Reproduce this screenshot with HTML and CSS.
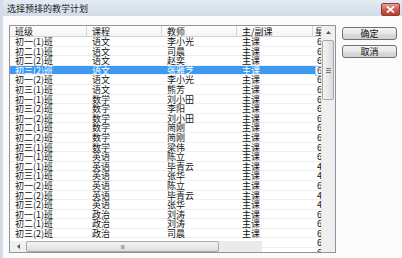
FILE: index.html
```html
<!DOCTYPE html>
<html lang="zh-CN">
<head>
    <meta charset="UTF-8">
    <title>选择预排的教学计划</title>
    <link rel="stylesheet" href="styles.css">
</head>
<body>
    <div class="window">
        <div class="titlebar">
            <span class="title">选择预排的教学计划</span>
            <span class="close-btn">
                <svg width="9" height="7" viewBox="0 0 9 7"><path d="M1 0.5 L8 6.5 M8 0.5 L1 6.5" stroke="#fff" stroke-width="1.8"/></svg>
            </span>
        </div>
        <div class="content">
            <div class="listview">
                <div class="grid">
                    <div class="row header">
                        <div class="cell c1">班级</div>
                        <div class="cell c2">课程</div>
                        <div class="cell c3">教师</div>
                        <div class="cell c4">主/副课</div>
                        <div class="cell c5">星期课时</div>
                    </div>
                    <div class="rows">
                        <div class="row"><div class="cell c1">初一(1)班</div><div class="cell c2">语文</div><div class="cell c3">李小光</div><div class="cell c4">主课</div><div class="cell c5">6</div></div>
                        <div class="row"><div class="cell c1">初二(1)班</div><div class="cell c2">语文</div><div class="cell c3">司晨</div><div class="cell c4">主课</div><div class="cell c5">6</div></div>
                        <div class="row"><div class="cell c1">初二(2)班</div><div class="cell c2">语文</div><div class="cell c3">赵奕</div><div class="cell c4">主课</div><div class="cell c5">6</div></div>
                        <div class="row selected"><div class="cell c1">初三(2)班</div><div class="cell c2">语文</div><div class="cell c3">张雅芝</div><div class="cell c4">主课</div><div class="cell c5"><span class="focus">6</span></div></div>
                        <div class="row"><div class="cell c1">初一(2)班</div><div class="cell c2">语文</div><div class="cell c3">李小光</div><div class="cell c4">主课</div><div class="cell c5">6</div></div>
                        <div class="row"><div class="cell c1">初三(1)班</div><div class="cell c2">语文</div><div class="cell c3">熊芳</div><div class="cell c4">主课</div><div class="cell c5">6</div></div>
                        <div class="row"><div class="cell c1">初一(1)班</div><div class="cell c2">数学</div><div class="cell c3">刘小田</div><div class="cell c4">主课</div><div class="cell c5">6</div></div>
                        <div class="row"><div class="cell c1">初三(2)班</div><div class="cell c2">数学</div><div class="cell c3">李阳</div><div class="cell c4">主课</div><div class="cell c5">6</div></div>
                        <div class="row"><div class="cell c1">初一(2)班</div><div class="cell c2">数学</div><div class="cell c3">刘小田</div><div class="cell c4">主课</div><div class="cell c5">6</div></div>
                        <div class="row"><div class="cell c1">初二(1)班</div><div class="cell c2">数学</div><div class="cell c3">简刚</div><div class="cell c4">主课</div><div class="cell c5">6</div></div>
                        <div class="row"><div class="cell c1">初二(2)班</div><div class="cell c2">数学</div><div class="cell c3">简刚</div><div class="cell c4">主课</div><div class="cell c5">6</div></div>
                        <div class="row"><div class="cell c1">初三(1)班</div><div class="cell c2">数学</div><div class="cell c3">梁伟</div><div class="cell c4">主课</div><div class="cell c5">6</div></div>
                        <div class="row"><div class="cell c1">初一(1)班</div><div class="cell c2">英语</div><div class="cell c3">陈立</div><div class="cell c4">主课</div><div class="cell c5">6</div></div>
                        <div class="row"><div class="cell c1">初二(1)班</div><div class="cell c2">英语</div><div class="cell c3">毕青云</div><div class="cell c4">主课</div><div class="cell c5">4</div></div>
                        <div class="row"><div class="cell c1">初三(1)班</div><div class="cell c2">英语</div><div class="cell c3">张华</div><div class="cell c4">主课</div><div class="cell c5">4</div></div>
                        <div class="row"><div class="cell c1">初一(2)班</div><div class="cell c2">英语</div><div class="cell c3">陈立</div><div class="cell c4">主课</div><div class="cell c5">6</div></div>
                        <div class="row"><div class="cell c1">初二(2)班</div><div class="cell c2">英语</div><div class="cell c3">毕青云</div><div class="cell c4">主课</div><div class="cell c5">4</div></div>
                        <div class="row"><div class="cell c1">初三(2)班</div><div class="cell c2">英语</div><div class="cell c3">张华</div><div class="cell c4">主课</div><div class="cell c5">4</div></div>
                        <div class="row"><div class="cell c1">初一(1)班</div><div class="cell c2">政治</div><div class="cell c3">刘涛</div><div class="cell c4">主课</div><div class="cell c5">6</div></div>
                        <div class="row"><div class="cell c1">初二(1)班</div><div class="cell c2">政治</div><div class="cell c3">刘涛</div><div class="cell c4">主课</div><div class="cell c5">6</div></div>
                        <div class="row"><div class="cell c1">初三(2)班</div><div class="cell c2">政治</div><div class="cell c3">司晨</div><div class="cell c4">主课</div><div class="cell c5">6</div></div>
                        <div class="row"><div class="cell c1"></div><div class="cell c2"></div><div class="cell c3"></div><div class="cell c4"></div><div class="cell c5">6</div></div>
                        <div class="row"><div class="cell c1"></div><div class="cell c2"></div><div class="cell c3"></div><div class="cell c4"></div><div class="cell c5">6</div></div>
                    </div>
                    <!-- horizontal scrollbar sits over the last rows -->
                    <div class="hscroll">
                        <div class="hbtn">
                            <svg width="3" height="5" viewBox="0 0 3 5"><path d="M3 0 L0 2.5 L3 5 Z" fill="#555"/></svg>
                        </div>
                        <div class="hthumb"><span class="grip">III</span></div>
                        <div class="htrack"></div>
                    </div>
                </div>
                <div class="vscroll">
                    <div class="vbtn">
                        <svg width="5" height="3" viewBox="0 0 5 3"><path d="M0 3 L2.5 0 L5 3 Z" fill="#555"/></svg>
                    </div>
                    <div class="vthumb"><span class="vgrip"></span></div>
                </div>
            </div>
            <div class="buttons">
                <button type="button" class="btn">确定</button>
                <button type="button" class="btn">取消</button>
            </div>
        </div>
    </div>
</body>
</html>
```

FILE: styles.css
```css
/* window frame */
body {
    margin: 0;
    padding: 0;
    font-family: "Noto Sans CJK SC", "Liberation Sans", sans-serif;
    background-color: #fafafa;
}

.window {
    width: 402px;
    height: 258px;
    background-color: #fbfbfb;
    border-left: 3px solid #d4dce6;
    box-sizing: border-box;
    display: flex;
    flex-direction: column;
    overflow: hidden;
}

/* title bar */
.titlebar {
    height: 16px;
    flex: none;
    display: flex;
    align-items: center;
    justify-content: space-between;
    background: linear-gradient(#e4ebf3, #d2dce8);
    padding-left: 4px;
    padding-right: 2px;
}

.title {
    font-size: 9px;
    color: #222;
    line-height: 12px;
    margin-top: 1px;
}

.close-btn {
    width: 17px;
    height: 11px;
    margin-top: 2px;
    border-radius: 2px;
    border: 1px solid #8d3a3a;
    background: linear-gradient(#e6a196, #c9584a 55%, #b8402f);
    display: flex;
    align-items: center;
    justify-content: center;
}

/* content */
.content {
    flex: 1;
    display: flex;
    padding: 9px 0 5px 6px;
}

.listview {
    width: 327px;
    height: 228px;
    border: 1px solid #8e959d;
    box-sizing: border-box;
    background-color: #fff;
    display: flex;
}

.grid {
    flex: 1;
    position: relative;
    overflow: hidden;
}

.row {
    display: flex;
    height: 9.6px;
    line-height: 9.6px;
    font-size: 9px;
    color: #111;
    border-bottom: 1px solid #f0f0f0;
    box-sizing: border-box;
    white-space: nowrap;
}

.cell {
    padding-left: 5px;
    box-sizing: border-box;
    overflow-x: clip;
    overflow-y: visible;
    flex: none;
}

.c1 { width: 77px; }
.c2 { width: 75px; }
.c3 { width: 75px; }
.c4 { width: 76px; }
.c5 { width: 9px; padding-left: 4px; }

.row.header {
    height: 11px;
    line-height: 11px;
    background: linear-gradient(#ffffff, #f3f4f6);
    border-bottom: 1px solid #d5d5d5;
}

.row.header .cell {
    border-right: 1px solid #d5d5d5;
}

.row.header .c5 {
    border-right: none;
    padding-left: 2px;
}

.row.selected {
    background-color: #3d9af0;
    color: #fff;
}

.focus {
    display: inline-block;
    background-color: #fff;
    color: #333;
    outline: 1px solid #9ccaf4;
    line-height: 8px;
    margin-left: -1px;
    padding: 0 1px;
}

/* horizontal scroll bar */
.hscroll {
    position: absolute;
    left: 0;
    bottom: 0;
    width: 252px;
    height: 11px;
    display: flex;
    background-color: #ececec;
}

.hbtn {
    width: 16px;
    display: flex;
    align-items: center;
    justify-content: center;
    background-color: #f0f0f0;
}

.hthumb {
    width: 193px;
    box-sizing: border-box;
    border: 1px solid #a8a8a8;
    border-radius: 2px;
    background: linear-gradient(#f4f4f4, #dedede);
    display: flex;
    align-items: center;
    justify-content: center;
}

.grip {
    font-family: "Liberation Sans", sans-serif;
    font-size: 6px;
    color: #666;
    letter-spacing: -0.5px;
}

.htrack {
    flex: 1;
    background-color: #ebebeb;
}

/* vertical scroll bar */
.vscroll {
    width: 13px;
    background-color: #efefef;
    border-left: 1px solid #e2e2e2;
    display: flex;
    flex-direction: column;
}

.vbtn {
    height: 12px;
    display: flex;
    align-items: center;
    justify-content: center;
}

.vthumb {
    height: 60px;
    margin: 2px 1px 0 0;
    box-sizing: border-box;
    border: 1px solid #a8a8a8;
    border-radius: 2px;
    background: linear-gradient(90deg, #f4f4f4, #dcdcdc);
    display: flex;
    align-items: center;
    justify-content: center;
}

.vgrip {
    width: 5px;
    height: 5px;
    border-top: 1px solid #777;
    border-bottom: 1px solid #777;
    box-sizing: border-box;
    position: relative;
}

.vgrip::after {
    content: "";
    position: absolute;
    left: 0;
    right: 0;
    top: 1px;
    border-top: 1px solid #777;
}

/* buttons */
.buttons {
    display: flex;
    flex-direction: column;
    gap: 5px;
    margin-left: 6px;
    margin-top: 2px;
}

.btn {
    width: 55px;
    height: 13px;
    padding: 0;
    font-family: "Noto Sans CJK SC", sans-serif;
    font-size: 9px;
    line-height: 11px;
    color: #111;
    border: 1px solid #707070;
    border-radius: 3px;
    background: linear-gradient(#f4f4f4 0%, #e8e8e8 50%, #dcdcdc 51%, #d2d2d2 100%);
}
```
